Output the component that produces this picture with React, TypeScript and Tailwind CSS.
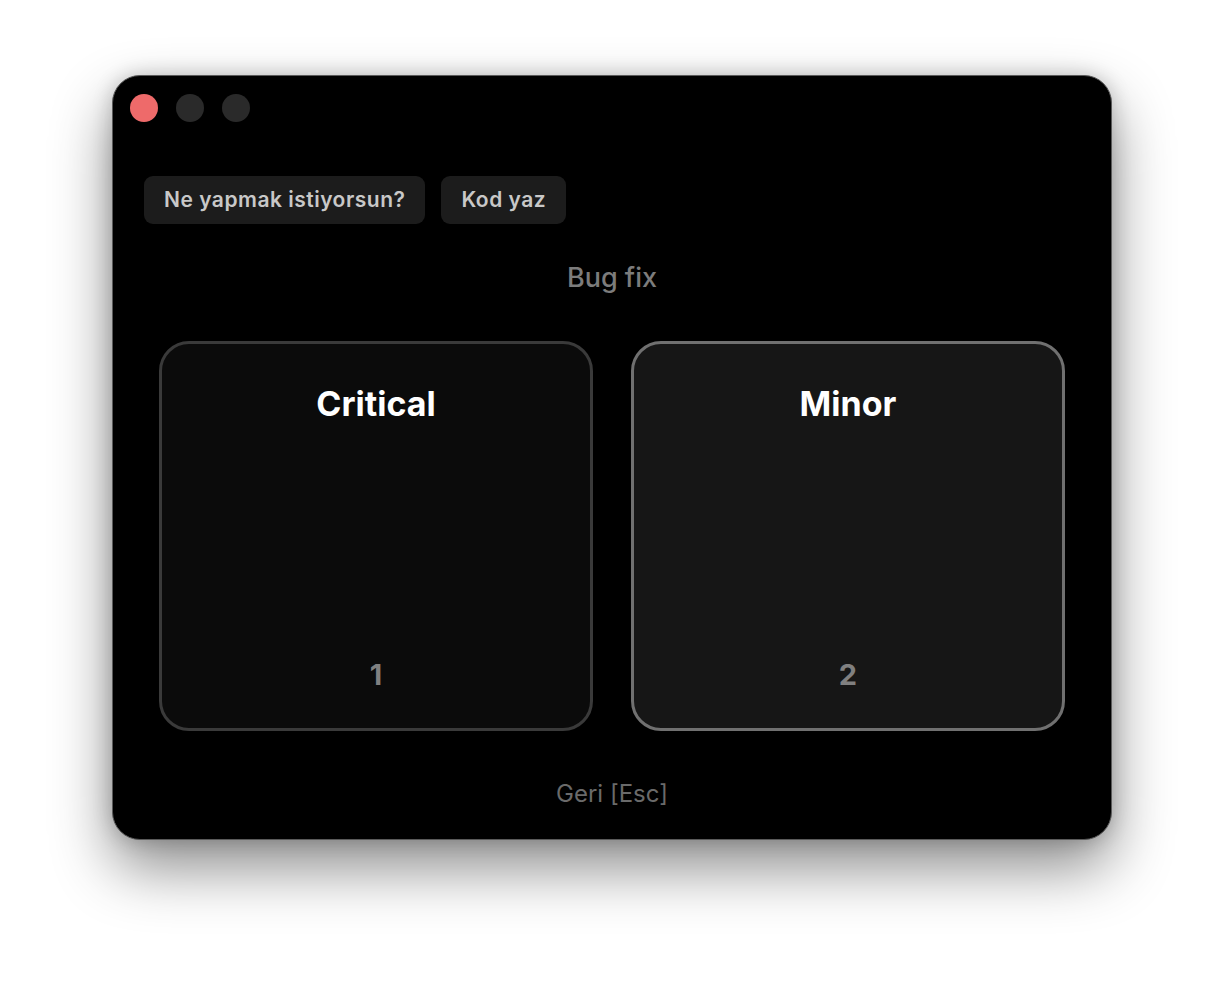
import React from "react";

export default function App() {
  return (
    <div className="w-[1224px] h-[988px] bg-white overflow-hidden" style={{ fontFamily: "Inter, 'Noto Sans', sans-serif" }}>
      <div className="pt-[75px] pl-[112px]">
        <div className="w-[1000px] h-[765px] rounded-[28px] bg-black border border-[#5a5a5a] shadow-[0_28px_60px_rgba(0,0,0,0.45),0_0_20px_rgba(0,0,0,0.2)] flex flex-col">
          <div className="flex gap-[18px] pl-[17px] pt-[18px]">
            <div className="w-[28px] h-[28px] rounded-full bg-[#ee6a6a]" />
            <div className="w-[28px] h-[28px] rounded-full bg-[#2a2a2a]" />
            <div className="w-[28px] h-[28px] rounded-full bg-[#2a2a2a]" />
          </div>
          <div className="flex gap-[16px] pl-[31px] mt-[54px]">
            <div className="h-[48px] px-[20px] rounded-[9px] bg-[#1c1c1c] text-[#c8c8c8] text-[21px] font-semibold tracking-[0.5px] flex items-center">Ne yapmak istiyorsun?</div>
            <div className="h-[48px] px-[20px] rounded-[9px] bg-[#1c1c1c] text-[#c8c8c8] text-[21px] font-semibold tracking-[0.5px] flex items-center">Kod yaz</div>
          </div>
          <div className="mt-[38px] text-center text-[27px] font-medium text-[#7c7c7c] leading-[32px]">Bug fix</div>
          <div className="mt-[47px] flex gap-[38px] px-[46px]">
            <div className="w-[434px] h-[390px] rounded-[30px] border-[3px] border-[#3a3a3a] bg-[#0b0b0b] flex flex-col items-center justify-between pt-[36px] pb-[36px]">
              <div className="text-white text-[34px] font-bold leading-[48px]">Critical</div>
              <div className="text-[#808080] text-[29px] font-bold leading-[34px]">1</div>
            </div>
            <div className="w-[434px] h-[390px] rounded-[30px] border-[3px] border-[#707070] bg-[#161616] flex flex-col items-center justify-between pt-[36px] pb-[36px]">
              <div className="text-white text-[34px] font-bold leading-[48px]">Minor</div>
              <div className="text-[#808080] text-[29px] font-bold leading-[34px]">2</div>
            </div>
          </div>
          <div className="mt-[48px] text-center text-[24px] text-[#6a6a6a] leading-[30px]">Geri [Esc]</div>
        </div>
      </div>
    </div>
  );
}
